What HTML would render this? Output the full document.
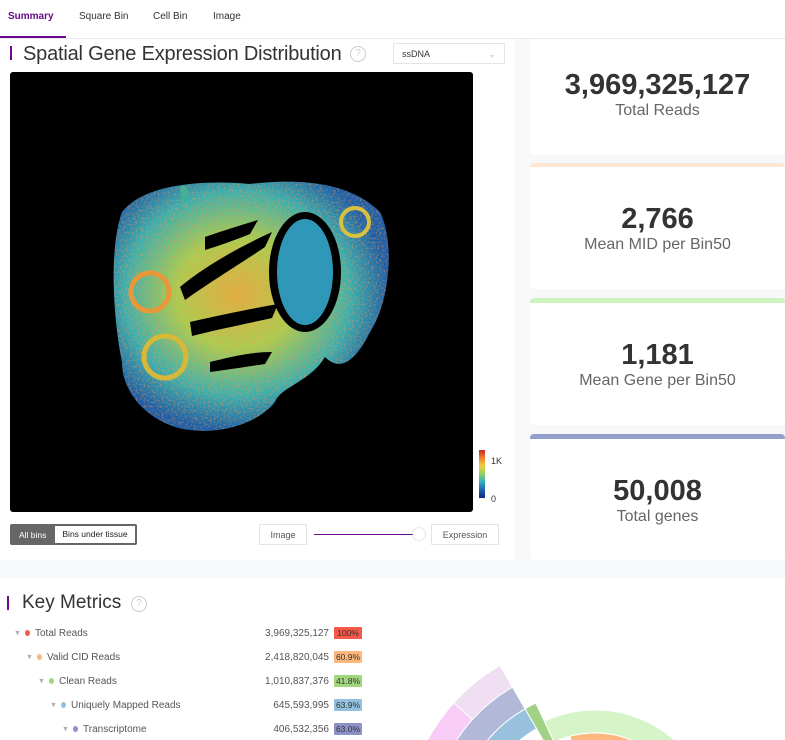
<!DOCTYPE html><html><head><meta charset="utf-8"><style>
html,body{margin:0;width:785px;height:740px;overflow:hidden}
body{background:#f7f8fa;font-family:"Liberation Sans",sans-serif;position:relative}
.abs{position:absolute}
.tabs{left:0;top:0;width:785px;height:38px;background:#fff;border-bottom:1px solid #e8e8ee}
.tab{top:11px;font-size:10px;color:#333}
.card{background:#fff;border-radius:4px;left:530px;width:255px;text-align:center}
.num{font-weight:bold;font-size:29px;color:#333}
.lab{font-size:16px;color:#666}
.row{font-size:10px;color:#555;height:13px;line-height:13px}
.pct{position:absolute;left:334px;top:0;width:28px;height:12px;font-size:8.5px;color:#333;text-align:center;line-height:12px;border-radius:1px}
.val{position:absolute;left:200px;width:129px;text-align:right}
</style></head><body>
<div class="abs tabs"></div>
<div class="abs tab" style="left:8px;color:#6a0a8a;font-weight:bold">Summary</div>
<div class="abs" style="left:0;top:36px;width:66px;height:2px;background:#6a0a8a"></div>
<div class="abs tab" style="left:79px">Square Bin</div>
<div class="abs tab" style="left:153px">Cell Bin</div>
<div class="abs tab" style="left:213px">Image</div>

<div class="abs" style="left:0;top:39px;width:515px;height:521px;background:#fff"></div>
<div class="abs" style="left:10px;top:46px;width:2px;height:14px;background:#6a0a8a"></div>
<div class="abs" style="left:23px;top:43px;font-size:20px;color:#333;letter-spacing:-0.2px">Spatial Gene Expression Distribution</div>
<div class="abs" style="left:350px;top:46px;width:14px;height:14px;border:1px solid #ccc;border-radius:50%;color:#ccc;font-size:10px;text-align:center;line-height:14px">?</div>
<div class="abs" style="left:393px;top:43px;width:112px;height:21px;border:1px solid #e4e4e4;font-size:9px;color:#333;line-height:21px;padding-left:8px;box-sizing:border-box">ssDNA<span style="position:absolute;right:8px;color:#bbb">⌄</span></div>
<div class="abs" style="left:10px;top:72px;width:463px;height:440px;background:#000;border-radius:3px"></div>
<svg class="abs" style="left:10px;top:72px" width="463" height="440">
<defs><radialGradient id="g" cx="45%" cy="45%" r="55%"><stop offset="0" stop-color="#e0b040"/><stop offset=".4" stop-color="#a8cf50"/><stop offset=".75" stop-color="#38b0b0"/><stop offset="1" stop-color="#1b5fa8"/></radialGradient>
<filter id="n"><feTurbulence type="fractalNoise" baseFrequency="0.5" numOctaves="2" seed="3"/><feColorMatrix values="0 0 0 0 0.9  0 0 0 0 0.3  0 0 0 0 0.1  0 0 0 1.6 -0.75"/><feComposite in2="SourceGraphic" operator="in"/></filter></defs>
<path id="t" d="M112 140 C135 110 200 108 240 112 C290 106 340 110 370 140 C385 170 380 230 360 260 C345 290 330 300 315 285 C300 310 270 315 265 330 C245 355 200 365 165 355 C135 345 112 320 112 290 C104 250 98 180 112 140Z" fill="url(#g)"/>
<use href="#t" filter="url(#n)"/>
<path d="M170 115 C175 110 180 118 178 125 L172 130Z" fill="#48b090"/>
<ellipse cx="295" cy="200" rx="36" ry="60" fill="#000"/>
<ellipse cx="295" cy="200" rx="28" ry="53" fill="#2f98b8"/>
<path d="M170 215 C200 190 240 170 262 160 L255 175 C230 192 200 210 175 228Z M195 165 C215 158 235 152 248 148 L240 162 C220 170 205 175 195 178Z M180 250 C210 243 245 236 268 232 L262 246 C235 252 205 258 182 264Z M200 290 C220 285 240 280 262 280 L255 292 C235 295 215 298 200 300Z" fill="#000"/>
<circle cx="140" cy="220" r="19" fill="none" stroke="#e89838" stroke-width="5"/>
<circle cx="155" cy="285" r="21" fill="none" stroke="#d8b838" stroke-width="5"/>
<circle cx="345" cy="150" r="14" fill="none" stroke="#d8c040" stroke-width="4"/>
</svg>
<div class="abs" style="left:479px;top:450px;width:6px;height:48px;background:linear-gradient(#c62828,#f08030,#f0d040,#90d060,#30b0c0,#1e60b0,#1a237e)"></div>
<div class="abs" style="left:491px;top:456px;font-size:9px;color:#333">1K</div>
<div class="abs" style="left:491px;top:494px;font-size:9px;color:#333">0</div>
<div class="abs" style="left:10px;top:524px;width:127px;height:21px;border:1px solid #666;border-radius:2px;background:#666;box-sizing:border-box"></div>
<div class="abs" style="left:19px;top:530px;font-size:8.5px;color:#fff">All bins</div>
<div class="abs" style="left:55px;top:526px;width:80px;height:17px;background:#fff;font-size:8.5px;color:#222;text-align:center;line-height:17px">Bins under tissue</div>
<div class="abs" style="left:259px;top:524px;width:48px;height:21px;border:1px solid #e4e4e4;font-size:9px;color:#555;text-align:center;line-height:21px;box-sizing:border-box">Image</div>
<div class="abs" style="left:314px;top:534px;width:104px;height:1px;background:#6a0a8a"></div>
<div class="abs" style="left:413px;top:528px;width:12px;height:12px;border-radius:50%;background:#fff;box-shadow:0 0 2px #bbb"></div>
<div class="abs" style="left:431px;top:524px;width:68px;height:21px;border:1px solid #e4e4e4;font-size:9px;color:#555;text-align:center;line-height:21px;box-sizing:border-box">Expression</div>

<div class="abs card" style="top:39px;height:116px"><div class="num" style="margin-top:30px">3,969,325,127</div><div class="lab">Total Reads</div></div>
<div class="abs card" style="top:163px;height:126px;border-top:4px solid #fde6d4;box-sizing:border-box"><div class="num" style="margin-top:36px">2,766</div><div class="lab">Mean MID per Bin50</div></div>
<div class="abs card" style="top:298px;height:127px;border-top:5px solid #cdf3bf;box-sizing:border-box"><div class="num" style="margin-top:36px">1,181</div><div class="lab">Mean Gene per Bin50</div></div>
<div class="abs card" style="top:434px;height:126px;border-top:5px solid #959fcc;box-sizing:border-box"><div class="num" style="margin-top:36px">50,008</div><div class="lab">Total genes</div></div>

<div class="abs" style="left:0;top:578px;width:785px;height:162px;background:#fff"></div>
<div class="abs" style="left:7px;top:596px;width:2px;height:14px;background:#6a0a8a"></div>
<div class="abs" style="left:22px;top:592px;font-size:19px;color:#333">Key Metrics</div>
<div class="abs" style="left:131px;top:596px;width:14px;height:14px;border:1px solid #ccc;border-radius:50%;color:#ccc;font-size:10px;text-align:center;line-height:14px">?</div>

<div class="abs row" style="left:0;top:627px;width:400px">
<span class="abs" style="left:14px;color:#aaa;font-size:7px">▼</span><span class="abs" style="left:25px;top:3px;width:5px;height:6px;border-radius:50%;background:#f4594a"></span><span class="abs" style="left:35px">Total Reads</span><span class="val">3,969,325,127</span><span class="pct" style="background:#f4594a">100%</span></div>
<div class="abs row" style="left:0;top:651px;width:400px">
<span class="abs" style="left:26px;color:#aaa;font-size:7px">▼</span><span class="abs" style="left:37px;top:3px;width:5px;height:6px;border-radius:50%;background:#fcb77c"></span><span class="abs" style="left:47px">Valid CID Reads</span><span class="val">2,418,820,045</span><span class="pct" style="background:#fcb77c">60.9%</span></div>
<div class="abs row" style="left:0;top:675px;width:400px">
<span class="abs" style="left:38px;color:#aaa;font-size:7px">▼</span><span class="abs" style="left:49px;top:3px;width:5px;height:6px;border-radius:50%;background:#9fd67e"></span><span class="abs" style="left:59px">Clean Reads</span><span class="val">1,010,837,376</span><span class="pct" style="background:#9fd67e">41.8%</span></div>
<div class="abs row" style="left:0;top:699px;width:400px">
<span class="abs" style="left:50px;color:#aaa;font-size:7px">▼</span><span class="abs" style="left:61px;top:3px;width:5px;height:6px;border-radius:50%;background:#92c0dd"></span><span class="abs" style="left:71px">Uniquely Mapped Reads</span><span class="val">645,593,995</span><span class="pct" style="background:#92c0dd">63.9%</span></div>
<div class="abs row" style="left:0;top:723px;width:400px">
<span class="abs" style="left:62px;color:#aaa;font-size:7px">▼</span><span class="abs" style="left:73px;top:3px;width:5px;height:6px;border-radius:50%;background:#8c92c8"></span><span class="abs" style="left:83px">Transcriptome</span><span class="val">406,532,356</span><span class="pct" style="background:#8c92c8">63.0%</span></div>

<svg id="sb" class="abs" style="left:0;top:0" width="785" height="740"></svg>
<script>
(function(){
var cx=595,cy=830,s='';
function p(a,r){a=a*Math.PI/180;return [(cx+r*Math.sin(a)).toFixed(1),(cy-r*Math.cos(a)).toFixed(1)];}
function arc(r0,r1,a0,a1,c){var A=p(a0,r1),B=p(a1,r1),C=p(a1,r0),D=p(a0,r0),l=(a1-a0)>180?1:0;
s+='<path d="M'+A+' A'+r1+' '+r1+' 0 '+l+' 1 '+B+' L'+C+' A'+r0+' '+r0+' 0 '+l+' 0 '+D+'Z" fill="'+c+'" stroke="#fff" stroke-width="1"/>';}
arc(97,120,-25,80,'#d5f5c8');
arc(75,97,-15,80,'#fcb77c');
arc(97,140,-30,-25,'#a0d185');
arc(117,140,-60,-30,'#97c1dd');
arc(140,165,-60,-30,'#b1b8d8');
arc(165,190,-48,-30,'#f0def2');
arc(165,190,-75,-48,'#f7cdf7');
document.getElementById('sb').innerHTML='<clipPath id="cp"><rect x="0" y="578" width="785" height="162"/></clipPath><g clip-path="url(#cp)">'+s+'</g>';
})();
</script>
</body></html>
